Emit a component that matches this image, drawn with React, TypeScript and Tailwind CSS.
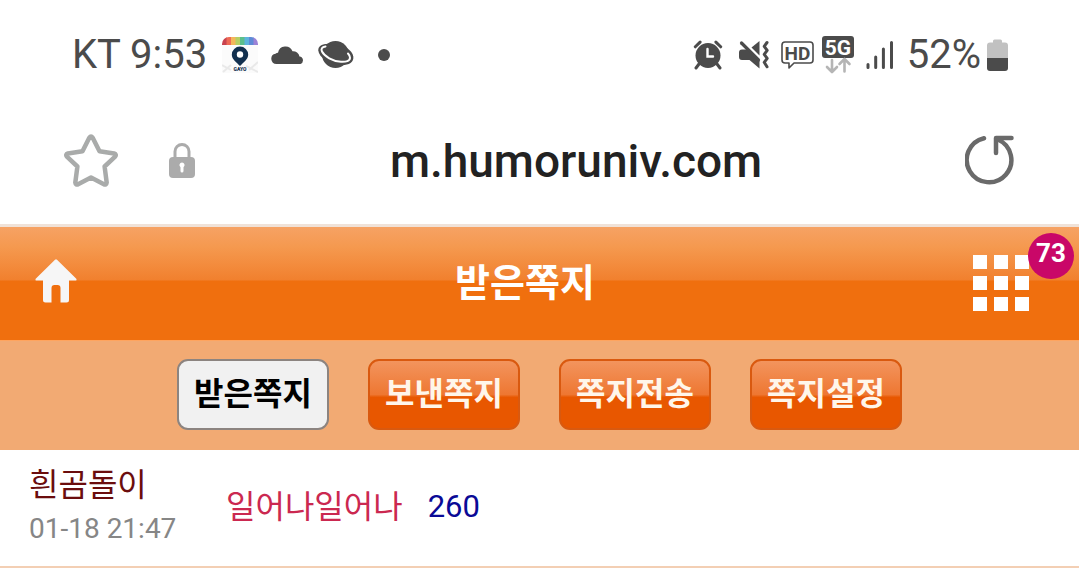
import { clsx } from 'clsx';

const FONT = "font-['Roboto','Noto_Sans_CJK_KR',sans-serif]";

const tabs = ['받은쪽지', '보낸쪽지', '쪽지전송', '쪽지설정'];

const messages = [
  { sender: '흰곰돌이', date: '01-18 21:47', title: '일어나일어나', count: 260 },
];

function GayoIcon() {
  const stripes = ['#c8434f', '#ee6a55', '#f3b65a', '#b5cf63', '#5cbf8c', '#5db4dd', '#5e8ad6', '#9b82d6'];
  return (
    <svg width="36" height="36" viewBox="0 0 36 36" aria-hidden="true">
      <clipPath id="roof">
        <path d="M7 0h22a7 7 0 0 1 7 7v1H0V7a7 7 0 0 1 7-7z" />
      </clipPath>
      <rect y="6" width="36" height="30" fill="#fbfbfb" />
      <path d="M0 28l9 5M1 35l8-7M24 29l12 6M27 33l9-8" stroke="#e9e9e9" strokeWidth="2" />
      <g clipPath="url(#roof)">
        {stripes.map((fill, i) => (
          <rect key={fill} x={i * 4.5} width="5" height="8" fill={fill} />
        ))}
      </g>
      <path d="M18 9.500a8.200 8.200 0 0 1 8.200 8.200c0 4.500-4.700 7.500-8.200 11.300-3.500-3.800-8.200-6.800-8.200-11.300A8.200 8.200 0 0 1 18 9.500z" fill="#12304f" />
      <circle cx="18" cy="17.500" r="3.200" fill="#fff" />
      <text x="18" y="34" textAnchor="middle" fontSize="5" fontWeight="900" fill="#12304f">
        GAYO
      </text>
    </svg>
  );
}

function CloudIcon() {
  return (
    <svg width="34" height="20" viewBox="0 0 34 20" fill="#4b4b4b" aria-hidden="true">
      <path d="M5.500 19a5.200 5.200 0 0 1-1-10.300A4 4 0 0 1 7 7.700a7.600 7.600 0 0 1 14.500-1.500 6.500 6.500 0 0 1 7 5.300A3.900 3.900 0 0 1 29.500 19z" />
    </svg>
  );
}

function PlanetIcon() {
  return (
    <svg width="36" height="30" viewBox="0 0 36 30" aria-hidden="true">
      <circle cx="17.500" cy="14.500" r="13.500" fill="#4b4b4b" />
      <path d="M9 4C3.500 4 0 6.500.3 10.500 1 17.500 11 24.500 24 25c7 0 12-2.500 11.300-8.500-.4-3-2.800-6-6.300-8.500z" fill="#4b4b4b" />
      <path d="M7.500 6.500C3.800 7 2.800 9 4 11.500c2.500 5 10.500 9.600 19 10.300 5 .3 9-.8 9-4 0-1.800-.8-3-2-4.300" fill="none" stroke="#fff" strokeWidth="2" strokeLinecap="round" />
    </svg>
  );
}

function AlarmIcon() {
  return (
    <svg width="30" height="30" viewBox="0 0 30 30" fill="none" stroke="#4b4b4b" strokeLinecap="round" aria-hidden="true">
      <circle cx="15" cy="15.500" r="12.500" fill="#4b4b4b" stroke="none" />
      <path d="M2.300 6.800l4.800-4.700M27.700 6.800l-4.800-4.700" strokeWidth="3" />
      <path d="M6 24l-3 4M24 24l3 4" strokeWidth="3" />
      <path d="M14.500 9v7.500H20" stroke="#fff" strokeWidth="2.400" />
    </svg>
  );
}

function MuteIcon() {
  return (
    <svg width="30" height="30" viewBox="0 0 30 30" aria-hidden="true">
      <path d="M3 9.500h5.500L20.500 21v7.500L10.500 20H3a3 3 0 0 1-3-3v-4.500a3 3 0 0 1 3-3z" fill="#4b4b4b" />
      <path d="M12.500 7.500l8-6.500v14.500z" fill="#4b4b4b" />
      <path d="M2.500 3l17 17" stroke="#4b4b4b" strokeWidth="3.200" strokeLinecap="round" />
      <path d="M28 2.500l-2.800 3.800 3 4-3 4 3 4-3 4 2.800 4.500" fill="none" stroke="#4b4b4b" strokeWidth="3" strokeLinejoin="round" strokeLinecap="round" />
    </svg>
  );
}

function HdIcon() {
  return (
    <svg width="33" height="29" viewBox="0 0 33 29" fill="none" stroke="#4b4b4b" aria-hidden="true">
      <path d="M4 1h25a3 3 0 0 1 3 3v15a3 3 0 0 1-3 3H13L8 27v-5H4a3 3 0 0 1-3-3V4a3 3 0 0 1 3-3z" strokeWidth="1.600" strokeLinejoin="round" />
      <text x="16.500" y="18.500" textAnchor="middle" fontSize="19" fontWeight="700" fill="#4b4b4b" stroke="none">
        HD
      </text>
    </svg>
  );
}

function FiveGIcon() {
  return (
    <svg width="32" height="38" viewBox="0 0 32 38" aria-hidden="true">
      <rect width="32" height="22" rx="3" fill="#4b4b4b" />
      <text x="16" y="18.500" textAnchor="middle" fontSize="21" fontWeight="700" fill="#fff">
        5G
      </text>
      <g fill="none" stroke="#b5b5b5" strokeWidth="2.600" strokeLinecap="round" strokeLinejoin="round">
        <path d="M10 24v11.500M5 31l5 5 5-5" />
        <path d="M22.500 35.500V24M17.500 28l5-5 5 5" />
      </g>
    </svg>
  );
}

function SignalIcon() {
  return (
    <svg width="28" height="30" viewBox="0 0 28 30" stroke="#4b4b4b" strokeWidth="3" strokeLinecap="round" aria-hidden="true">
      <path d="M2 24.500v3M9.700 17v10.500M17.400 9v18.500M25.500 2.500v25" />
    </svg>
  );
}

function BatteryIcon() {
  return (
    <svg width="21" height="32" viewBox="0 0 21 32" aria-hidden="true">
      <path d="M6 3V2a1.500 1.500 0 0 1 1.500-1.500h6A1.500 1.500 0 0 1 15 2v1.500h3a3 3 0 0 1 3 3V19H0V6.500a3 3 0 0 1 3-3h3z" fill="#c1c1c1" />
      <path d="M0 19h21v10a3 3 0 0 1-3 3H3a3 3 0 0 1-3-3z" fill="#4b4b4b" />
    </svg>
  );
}

function StatusBar() {
  return (
    <div className="flex items-center justify-between pt-[25px] pb-[23px] pl-[72px] pr-[71px] text-[40px] leading-[60px] text-[#4b4b4b]">
      <div className="flex items-center">
        <span>KT 9:53</span>
        <div className="ml-[15px] flex items-center gap-[13px]">
          <GayoIcon />
          <CloudIcon />
          <PlanetIcon />
        </div>
        <span className="ml-6 size-3 rounded-full bg-[#4b4b4b]" />
      </div>
      <div className="flex items-center">
        <div className="mr-[13px] flex items-center">
          <AlarmIcon />
          <div className="ml-4 flex items-center gap-3">
            <MuteIcon />
            <HdIcon />
          </div>
          <div className="ml-2 flex items-center gap-3">
            <FiveGIcon />
            <SignalIcon />
          </div>
        </div>
        <span>52%</span>
        <div className="ml-[6px]">
          <BatteryIcon />
        </div>
      </div>
    </div>
  );
}

function AddressBar() {
  return (
    <div className="flex items-center pt-[22px] pb-8 pl-16 pr-16">
      <button type="button" aria-label="북마크">
        <svg width="54" height="54" viewBox="0 0 54 54" fill="none" stroke="#a9abaa" strokeWidth="4.500" strokeLinejoin="round">
          <path d="M25.300 3.700q1.700-2.400 3.400 0l6.800 13.600 14.600 2.200q2.700.9 1 3.100L40.600 32.500l2.100 16.100q-.3 2.700-2.800 1.700L27 43.600 14.100 50.300q-2.500 1-2.800-1.700l2.100-16.100L2.900 22.600q-1.700-2.200 1-3.100l14.600-2.200z" />
        </svg>
      </button>
      <svg className="ml-[51px]" width="26" height="36" viewBox="0 0 26 36" aria-hidden="true">
        <path d="M6 14V8.500a7 7 0 0 1 14 0V14" fill="none" stroke="#ababab" strokeWidth="3" />
        <rect y="14" width="26" height="21" rx="4" fill="#ababab" />
        <path d="M13 19.500a2.600 2.600 0 0 1 1.500 4.700V28a1.500 1.500 0 0 1-3 0v-3.800a2.600 2.600 0 0 1 1.500-4.700z" fill="#fff" />
      </svg>
      <input
        type="text"
        aria-label="주소"
        defaultValue="m.humoruniv.com"
        className="mr-2 h-[62px] min-w-0 flex-1 text-center text-[46px] font-medium text-[#222] outline-none"
      />
      <button type="button" aria-label="새로고침">
        <svg width="50" height="54" viewBox="0 0 50 54" fill="none" stroke="#6a6a6a" strokeWidth="4.500" strokeLinecap="round" strokeLinejoin="round">
          <path d="M19 4.200A22.300 22.300 0 1 0 33 5.500" />
          <path d="M46.500 4H31v15" />
        </svg>
      </button>
    </div>
  );
}

function PageHeader() {
  return (
    <header className="flex items-center justify-between border-t-[3px] border-[#f0e2d8] bg-[linear-gradient(to_bottom,#f6a264_0px,#f5994f_20px,#f1802e_53px,#f06f0e_54px)] pt-[26px] pb-[27px] pl-[35px] pr-[50px]">
      <a href="#home" aria-label="홈">
        <svg width="42" height="48" viewBox="0 0 42 48" fill="#f6f6f6">
          <path d="M20 .8q1-.9 2 0l19.300 19q.8 1.700-1 1.800H34V41a2.500 2.500 0 0 1-2.500 2.500H25.500V29a3 3 0 0 0-3-3h-3a3 3 0 0 0-3 3v14.500h-6A2.500 2.500 0 0 1 8 41V21.600H1.700q-1.800-.1-1-1.800z" />
        </svg>
      </a>
      <h1 className="text-[38px] leading-[60px] font-bold text-white">받은쪽지</h1>
      <button type="button" aria-label="메뉴" className="relative grid grid-cols-3 gap-[7px]">
        {Array.from({ length: 9 }, (_, i) => (
          <span key={i} className="size-[14px] bg-white" />
        ))}
        <span className="absolute -top-[22px] left-[55px] flex size-[46px] items-center justify-center rounded-full bg-[#c90768] pb-[7px] text-[26px] leading-none font-bold text-white">
          73
        </span>
      </button>
    </header>
  );
}

function TabBar() {
  return (
    <nav className="flex justify-center gap-[39px] border-t border-[#ffa45e] bg-[#f2aa73] pt-[18px] pb-5">
      {tabs.map((label, i) => (
        <button
          key={label}
          type="button"
          className={clsx(
            'w-[152px] rounded-[11px] border-2 pt-[9px] pb-[10px] text-[32px] leading-[48px] font-bold',
            i === 0
              ? 'border-[#8c8480] bg-[#f1f1f1] text-black'
              : 'border-[#d9590f] bg-[linear-gradient(to_bottom,#f39660,#ee7732_50%,#e85700_54%,#e85700)] bg-origin-border text-[#fff6ea]',
          )}
        >
          {label}
        </button>
      ))}
    </nav>
  );
}

export default function App() {
  return (
    <div className={clsx(FONT, 'bg-white')}>
      <StatusBar />
      <AddressBar />
      <PageHeader />
      <TabBar />
      <ul>
        {messages.map((msg) => (
          <li key={msg.date} className="flex items-center border-b-2 border-[#f3cfb4] pt-[13px] pb-[15px] pl-[29px]">
            <div className="w-[197px]">
              <div className="text-[32px] leading-[44px] text-[#6b0d0d]">{msg.sender}</div>
              <div className="text-[28px] leading-[44px] text-[#868686]">{msg.date}</div>
            </div>
            <a href="#message" className="text-[32px] leading-[46px] text-[#cb2850]">
              {msg.title}
            </a>
            <span className="ml-[25px] text-[31px] leading-[46px] text-[#0a0a96]">{msg.count}</span>
          </li>
        ))}
      </ul>
    </div>
  );
}
